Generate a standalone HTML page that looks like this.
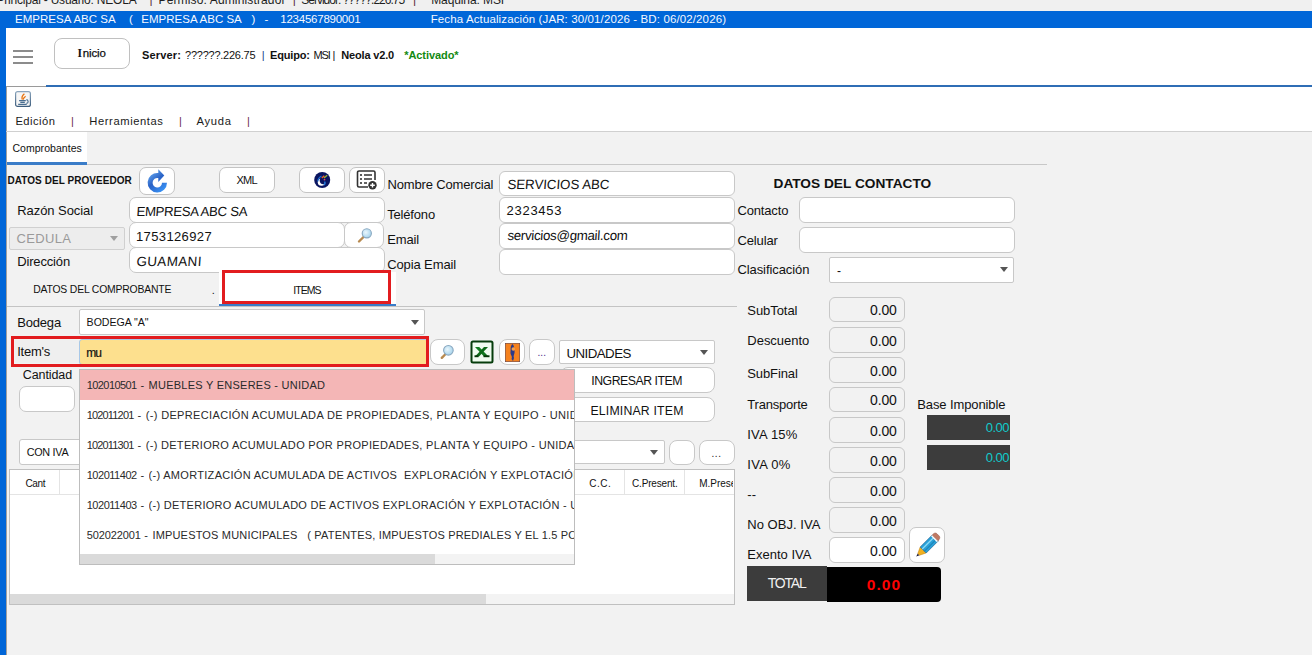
<!DOCTYPE html>
<html><head><meta charset="utf-8"><style>
html,body{margin:0;padding:0;}
body{width:1312px;height:655px;overflow:hidden;position:relative;background:#f2f2f2;font-family:"Liberation Sans", sans-serif;}
.t{position:absolute;white-space:pre;line-height:1;}
</style></head><body>
<div style="position:absolute;left:0px;top:0px;width:1312px;height:11px;background:#f0f0f0"></div>
<div style="position:absolute;left:0px;top:11px;width:1312px;height:17px;background:#0066d8"></div>
<div style="position:absolute;left:0px;top:11px;width:6px;height:644px;background:#0066d8"></div>
<div style="position:absolute;left:6px;top:28px;width:1306px;height:58px;background:#fff"></div>
<div style="position:absolute;left:13px;top:50px;width:20px;height:2px;background:#8c8c8c"></div>
<div style="position:absolute;left:13px;top:56px;width:20px;height:2px;background:#8c8c8c"></div>
<div style="position:absolute;left:13px;top:62px;width:20px;height:2px;background:#8c8c8c"></div>
<div style="position:absolute;left:54px;top:38px;width:76px;height:31px;box-sizing:border-box;border:1px solid #c0c0c0;border-radius:8px;background:#fff"></div>
<div style="position:absolute;left:6px;top:86px;width:1306px;height:1px;background:#9a9a9a"></div>
<div style="position:absolute;left:46px;top:85px;width:1266px;height:1.5px;background:#2f6db5"></div>
<div style="position:absolute;left:6px;top:87px;width:1306px;height:44px;background:#fff"></div>
<div style="position:absolute;left:6px;top:87px;width:1px;height:568px;background:#a0a0a0"></div>
<svg style="position:absolute;left:15px;top:91px" width="16" height="16" viewBox="0 0 16 16">
<defs><linearGradient id="jg" x1="0" y1="0" x2="0" y2="1"><stop offset="0" stop-color="#8aa4bc"/><stop offset="1" stop-color="#3e5e7e"/></linearGradient></defs>
<rect x="0.6" y="0.6" width="14.8" height="14.8" rx="2" fill="#f6f6f6" stroke="url(#jg)" stroke-width="1.2"/>
<path d="M9.4 2.8 C7.4 4.4 6.4 6.2 7.3 8.6" stroke="#e8730f" stroke-width="1.3" fill="none"/>
<path d="M10.6 5.2 C9 6.4 8.1 7.4 8.1 8.8" stroke="#e8730f" stroke-width="1.2" fill="none"/>
<path d="M4.1 9.6 H10.8 M5.3 11.4 H9.8 M3.2 13.4 H11.7" stroke="#4a6e90" stroke-width="1.1"/>
<path d="M11.4 8.6 C13.6 9 13.9 11.8 11.4 12.4" stroke="#4a6e90" stroke-width="1.1" fill="none"/>
</svg>
<div style="position:absolute;left:6px;top:131px;width:1306px;height:1px;background:#d0d0d0"></div>
<div style="position:absolute;left:7px;top:132px;width:80px;height:30px;background:#fff"></div>
<div style="position:absolute;left:7px;top:162px;width:80px;height:3px;background:#3a7cc8"></div>
<div style="position:absolute;left:87px;top:164px;width:960px;height:1px;background:#c8c8c8"></div>
<div style="position:absolute;left:139px;top:167px;width:36px;height:28px;box-sizing:border-box;border:1px solid #c4c4c4;border-radius:7px;background:#fff"></div>
<svg style="position:absolute;left:145px;top:169px" width="26" height="26" viewBox="0 0 26 26">
<defs><linearGradient id="rg" x1="0.2" y1="0" x2="0.9" y2="1"><stop offset="0" stop-color="#6aaef4"/><stop offset="0.45" stop-color="#2a62c6"/><stop offset="1" stop-color="#3c9cff"/></linearGradient></defs>
<path d="M22 13.7 A9.7 9.7 0 1 1 13.3 4.05 L13.3 0.2 L19.3 6.4 L13.3 12.9 L13.3 9.1 A4.7 4.7 0 1 0 17 13.7 Z" fill="url(#rg)"/>
</svg>
<div style="position:absolute;left:219px;top:167px;width:56px;height:26px;box-sizing:border-box;border:1px solid #c4c4c4;border-radius:7px;background:#fff"></div>
<div style="position:absolute;left:299px;top:167px;width:46px;height:26px;box-sizing:border-box;border:1px solid #c4c4c4;border-radius:7px;background:#fff"></div>
<svg style="position:absolute;left:313px;top:171px" width="18" height="18" viewBox="0 0 18 18">
<circle cx="9.2" cy="9" r="8" fill="#0a1560"/>
<circle cx="8.4" cy="11.2" r="3.6" fill="#fff"/><circle cx="10.4" cy="9.5" r="3.7" fill="#0a1560"/>
<path d="M8.5 5 C6 6.5 4.8 8.5 4.8 10.5" stroke="#1a6ad0" stroke-width="1.3" fill="none"/>
<path d="M11.6 10.5 C12.3 11.8 12 13.2 10.8 14" stroke="#2a80e0" stroke-width="1.3" fill="none"/>
<path d="M8.8 7 L11.3 4.8" stroke="#f06030" stroke-width="1.4"/>
<path d="M11 7 L14.2 4.3" stroke="#98b030" stroke-width="1.4"/>
<circle cx="11.5" cy="8.6" r="0.9" fill="#e04868"/>
</svg>
<div style="position:absolute;left:349px;top:167px;width:36px;height:26px;box-sizing:border-box;border:1px solid #c4c4c4;border-radius:7px;background:#fff"></div>
<svg style="position:absolute;left:356px;top:170px" width="22" height="20" viewBox="0 0 22 20">
<path d="M12 17 H3 A1.5 1.5 0 0 1 1.5 15.5 V2.5 A1.5 1.5 0 0 1 3 1 H17.5 A1.5 1.5 0 0 1 19 2.5 V10" stroke="#333" stroke-width="1.6" fill="none"/>
<circle cx="5" cy="5" r="1.1" fill="#333"/><circle cx="5" cy="9" r="1.1" fill="#333"/><circle cx="5" cy="13" r="1.1" fill="#333"/>
<path d="M8 5 H16 M8 9 H16 M8 13 H11" stroke="#333" stroke-width="1.6"/>
<circle cx="16.5" cy="15.3" r="4.2" fill="#333"/>
<path d="M16.5 13 V17.6 M14.2 15.3 H18.8" stroke="#fff" stroke-width="1.4"/>
</svg>
<div style="position:absolute;left:129px;top:197px;width:256px;height:26px;box-sizing:border-box;background:#fff;border:1px solid #c8c8c8;border-radius:7px"></div>
<div style="position:absolute;left:9px;top:227px;width:116px;height:23px;box-sizing:border-box;border:1px solid #d0d0d0;border-radius:2px;background:#ededed"></div>
<div style="position:absolute;left:109.5px;top:235.8px;width:0;height:0;border-left:4.0px solid transparent;border-right:4.0px solid transparent;border-top:5px solid #a0a0a0"></div>
<div style="position:absolute;left:129px;top:222px;width:216px;height:26px;box-sizing:border-box;background:#fff;border:1px solid #c8c8c8;border-radius:7px"></div>
<div style="position:absolute;left:344px;top:222px;width:40px;height:26px;box-sizing:border-box;background:#fff;border:1px solid #c8c8c8;border-radius:7px"></div>
<svg style="position:absolute;left:356px;top:226px" width="18" height="18" viewBox="0 0 18 18">
<defs><radialGradient id="lg" cx="0.4" cy="0.4" r="0.6"><stop offset="0" stop-color="#eaf6fc"/><stop offset="1" stop-color="#a8d4ec"/></radialGradient></defs>
<path d="M3 15.5 L7.5 11" stroke="#b88a50" stroke-width="2.4" stroke-linecap="round"/>
<circle cx="10.8" cy="7.3" r="4.6" fill="url(#lg)" stroke="#8aa8c0" stroke-width="1.1"/>
</svg>
<div style="position:absolute;left:129px;top:247px;width:256px;height:26px;box-sizing:border-box;background:#fff;border:1px solid #c8c8c8;border-radius:7px"></div>
<div style="position:absolute;left:499px;top:171px;width:236px;height:25px;box-sizing:border-box;background:#fff;border:1px solid #c8c8c8;border-radius:6px"></div>
<div style="position:absolute;left:499px;top:197px;width:236px;height:26px;box-sizing:border-box;background:#fff;border:1px solid #c8c8c8;border-radius:6px"></div>
<div style="position:absolute;left:499px;top:223px;width:236px;height:26px;box-sizing:border-box;background:#fff;border:1px solid #c8c8c8;border-radius:6px"></div>
<div style="position:absolute;left:499px;top:249px;width:236px;height:26px;box-sizing:border-box;background:#fff;border:1px solid #c8c8c8;border-radius:6px"></div>
<div style="position:absolute;left:799px;top:197px;width:216px;height:26px;box-sizing:border-box;background:#fff;border:1px solid #c8c8c8;border-radius:6px"></div>
<div style="position:absolute;left:799px;top:227px;width:216px;height:26px;box-sizing:border-box;background:#fff;border:1px solid #c8c8c8;border-radius:6px"></div>
<div style="position:absolute;left:829px;top:257px;width:185px;height:26px;box-sizing:border-box;background:#fff;border:1px solid #c8c8c8;border-radius:2px"></div>
<div style="position:absolute;left:1000.0px;top:267.45px;width:0;height:0;border-left:4.5px solid transparent;border-right:4.5px solid transparent;border-top:5.5px solid #555"></div>
<div style="position:absolute;left:219px;top:272px;width:177px;height:32px;background:#fff"></div>
<div style="position:absolute;left:219px;top:304px;width:177px;height:3px;background:#3a7cc8"></div>
<div style="position:absolute;left:7px;top:306px;width:730px;height:1px;background:#c4c4c4"></div>
<div style="position:absolute;left:221.5px;top:270px;width:169.6px;height:34.3px;box-sizing:border-box;border:3.6px solid #e21c1f"></div>
<div style="position:absolute;left:79px;top:309px;width:346px;height:26px;box-sizing:border-box;background:#fff;border:1px solid #c8c8c8;border-radius:2px"></div>
<div style="position:absolute;left:410.9px;top:319.75px;width:0;height:0;border-left:4.5px solid transparent;border-right:4.5px solid transparent;border-top:5.5px solid #555"></div>
<div style="position:absolute;left:15px;top:340px;width:64px;height:23px;background:#efefef"></div>
<div style="position:absolute;left:79px;top:339px;width:349px;height:26px;box-sizing:border-box;background:#fde08e;border:1px solid #a8c8e8;border-radius:3px"></div>
<div style="position:absolute;left:11px;top:335.8px;width:417.5px;height:31.3px;box-sizing:border-box;border:3.7px solid #e21c1f"></div>
<div style="position:absolute;left:430px;top:339px;width:35px;height:26px;box-sizing:border-box;background:#fff;border:1px solid #c8c8c8;border-radius:8px"></div>
<svg style="position:absolute;left:438px;top:342px" width="18" height="18" viewBox="0 0 18 18">
<path d="M3.8 15.8 L7.6 12" stroke="#b88a50" stroke-width="2.4" stroke-linecap="round"/>
<circle cx="10.4" cy="8.3" r="4.8" fill="url(#lg)" stroke="#8aa8c0" stroke-width="1.1"/>
</svg>
<svg style="position:absolute;left:470px;top:340px" width="24" height="24" viewBox="0 0 24 24">
<rect x="1.5" y="1.5" width="21" height="21" rx="1.5" fill="#f0fcf0" stroke="#063c0c" stroke-width="2"/>
<path d="M5 7 L9.2 7 L18.5 16.5 L14 16.5 Z" fill="#117a20"/>
<path d="M18 7 L14 7 L5 16.5 L9 16.5 Z" fill="#0c6a18"/>
<rect x="13.5" y="15.3" width="6" height="1.9" fill="#053808"/>
<rect x="4.5" y="15.3" width="4" height="1.9" fill="#053808"/>
</svg>
<div style="position:absolute;left:499px;top:339px;width:26px;height:26px;box-sizing:border-box;background:#fff;border:1px solid #c8c8c8;border-radius:8px"></div>
<svg style="position:absolute;left:505px;top:343px" width="15" height="19" viewBox="0 0 15 19">
<rect x="0" y="0" width="15" height="19" fill="#f5821f" stroke="#2a3a7a" stroke-width="0.8"/>
<path d="M7.5 1 C5 3 6 6 5.5 9 C5 12 8 13 6.5 16 L8 18 L9 15 C8 12 10 11 9.5 8 C9 5 9.5 3 7.5 1 Z" fill="#2a3a8a"/>
<circle cx="8.3" cy="6" r="1.8" fill="#f5a050"/>
</svg>
<div style="position:absolute;left:529px;top:339px;width:26px;height:26px;box-sizing:border-box;background:#fff;border:1px solid #c8c8c8;border-radius:8px"></div>
<div style="position:absolute;left:559px;top:340px;width:156px;height:24px;box-sizing:border-box;background:#fff;border:1px solid #c8c8c8;border-radius:2px"></div>
<div style="position:absolute;left:700.0px;top:349.9px;width:0;height:0;border-left:4.5px solid transparent;border-right:4.5px solid transparent;border-top:5px solid #555"></div>
<div style="position:absolute;left:19px;top:386px;width:56px;height:26px;box-sizing:border-box;background:#fff;border:1px solid #c8c8c8;border-radius:7px"></div>
<div style="position:absolute;left:560px;top:367px;width:155px;height:26px;box-sizing:border-box;background:#fff;border:1px solid #c8c8c8;border-radius:8px"></div>
<div style="position:absolute;left:560px;top:397px;width:155px;height:25px;box-sizing:border-box;background:#fff;border:1px solid #c8c8c8;border-radius:8px"></div>
<div style="position:absolute;left:19px;top:439px;width:100px;height:26px;box-sizing:border-box;background:#fff;border:1px solid #c8c8c8;border-radius:3px"></div>
<div style="position:absolute;left:100px;top:440px;width:565px;height:24px;box-sizing:border-box;background:#fff;border:1px solid #c8c8c8;border-radius:2px"></div>
<div style="position:absolute;left:650.0px;top:449.9px;width:0;height:0;border-left:4.5px solid transparent;border-right:4.5px solid transparent;border-top:5px solid #555"></div>
<div style="position:absolute;left:669px;top:440px;width:26px;height:25px;box-sizing:border-box;background:#fff;border:1px solid #c8c8c8;border-radius:8px"></div>
<div style="position:absolute;left:699px;top:440px;width:36px;height:25px;box-sizing:border-box;background:#fff;border:1px solid #c8c8c8;border-radius:8px"></div>
<div style="position:absolute;left:9px;top:469px;width:726px;height:136px;box-sizing:border-box;border:1px solid #c0c0c0;background:#fff"></div>
<div style="position:absolute;left:10px;top:494px;width:724px;height:1px;background:#e4e4e4"></div>
<div style="position:absolute;left:59px;top:470px;width:1px;height:24px;background:#e4e4e4"></div>
<div style="position:absolute;left:624px;top:470px;width:1px;height:24px;background:#e4e4e4"></div>
<div style="position:absolute;left:684px;top:470px;width:1px;height:24px;background:#e4e4e4"></div>
<div style="position:absolute;left:10px;top:594px;width:724px;height:10px;background:#f3f3f3"></div>
<div style="position:absolute;left:10px;top:594px;width:476px;height:10px;background:#dadada"></div>
<div style="position:absolute;left:79px;top:369px;width:496px;height:195.5px;box-sizing:border-box;border:1px solid #bdbdbd;background:#fff"></div>
<div style="position:absolute;left:80px;top:370px;width:494px;height:29.5px;background:#f4b6b6"></div>
<div style="position:absolute;left:80px;top:554px;width:494px;height:9.8px;background:#f3f3f3"></div>
<div style="position:absolute;left:80px;top:554px;width:354.8px;height:9.8px;background:#dadada"></div>
<div style="position:absolute;left:829px;top:297px;width:76px;height:25px;box-sizing:border-box;background:#f2f2f2;border:1px solid #c8c8c8;border-radius:6px"></div>
<div style="position:absolute;left:829px;top:327px;width:76px;height:26px;box-sizing:border-box;background:#f2f2f2;border:1px solid #c8c8c8;border-radius:6px"></div>
<div style="position:absolute;left:829px;top:357px;width:76px;height:26px;box-sizing:border-box;background:#f2f2f2;border:1px solid #c8c8c8;border-radius:6px"></div>
<div style="position:absolute;left:829px;top:387px;width:76px;height:25px;box-sizing:border-box;background:#f2f2f2;border:1px solid #c8c8c8;border-radius:6px"></div>
<div style="position:absolute;left:829px;top:417px;width:76px;height:26px;box-sizing:border-box;background:#f2f2f2;border:1px solid #c8c8c8;border-radius:6px"></div>
<div style="position:absolute;left:829px;top:447px;width:76px;height:26px;box-sizing:border-box;background:#f2f2f2;border:1px solid #c8c8c8;border-radius:6px"></div>
<div style="position:absolute;left:829px;top:477px;width:76px;height:26px;box-sizing:border-box;background:#f2f2f2;border:1px solid #c8c8c8;border-radius:6px"></div>
<div style="position:absolute;left:829px;top:507px;width:76px;height:26px;box-sizing:border-box;background:#f2f2f2;border:1px solid #c8c8c8;border-radius:6px"></div>
<div style="position:absolute;left:829px;top:537px;width:76px;height:26px;box-sizing:border-box;background:#fff;border:1px solid #c8c8c8;border-radius:6px"></div>
<div style="position:absolute;left:909px;top:527px;width:36px;height:36px;box-sizing:border-box;background:#fff;border:1px solid #c8c8c8;border-radius:7px"></div>
<svg style="position:absolute;left:913px;top:532px" width="28" height="28" viewBox="0 0 28 28">
<path d="M3.2 24.6 L4.8 21.6 L6.6 23.2 Z" fill="#1a1a3a"/>
<path d="M4.8 21.6 L7.2 15 L13.2 21 L6.6 23.2 Z" fill="#f0b020" stroke="#c08010" stroke-width="0.5"/>
<path d="M7.2 15 L19 3.2 L25 9.2 L13.2 21 Z" fill="#28a0d8" stroke="#1a5a88" stroke-width="0.6"/>
<path d="M9.2 17 L21 5.2" stroke="#8ad8f4" stroke-width="1.3"/>
<path d="M11.4 19.2 L23.2 7.4" stroke="#1a78a8" stroke-width="1"/>
<path d="M19 3.2 L20.8 1.6 C21.8 0.8 23 0.8 24 1.8 L26.2 4 C27 5 27 6.2 26.2 7.2 L25 9.2 Z" fill="#c07a64" stroke="#905040" stroke-width="0.5"/>
<path d="M18.6 3.8 L24.4 9.6" stroke="#f8f8f8" stroke-width="1.5"/>
</svg>
<div style="position:absolute;left:927px;top:415px;width:83px;height:25px;background:#3c3c3c"></div>
<div style="position:absolute;left:927px;top:445px;width:83px;height:25px;background:#3c3c3c"></div>
<div style="position:absolute;left:747px;top:566px;width:80px;height:35px;background:#3c3c3c"></div>
<div style="position:absolute;left:827px;top:566.5px;width:114px;height:35px;background:#000;border-radius:0 4px 4px 0"></div>
<div class="t" style="left:-3.5px;top:-6.2px;font-size:12px;color:#1e1e1e;letter-spacing:-0.21px;">Principal - Usuario: NEOLA</div>
<div class="t" style="left:149.5px;top:-6.7px;font-size:12px;color:#5a2a3a;">|</div>
<div class="t" style="left:158.5px;top:-6.2px;font-size:12px;color:#1e1e1e;letter-spacing:0.14px;">Permiso: Administrador</div>
<div class="t" style="left:292.8px;top:-6.7px;font-size:12px;color:#5a2a3a;">|</div>
<div class="t" style="left:301.2px;top:-6.2px;font-size:12px;color:#1e1e1e;letter-spacing:-0.99px;">Servidor: ?????.226.75</div>
<div class="t" style="left:412.9px;top:-6.7px;font-size:12px;color:#5a2a3a;">|</div>
<div class="t" style="left:431.2px;top:-6.2px;font-size:12px;color:#1e1e1e;letter-spacing:-0.10px;">Maquina: MSI</div>
<div class="t" style="left:15.0px;top:13.8px;font-size:11.5px;color:#f4f8ff;letter-spacing:0.03px;">EMPRESA ABC SA</div>
<div class="t" style="left:128.9px;top:13.8px;font-size:11.5px;color:#f4f8ff;">(</div>
<div class="t" style="left:141.3px;top:13.8px;font-size:11.5px;color:#f4f8ff;letter-spacing:0.01px;">EMPRESA ABC SA</div>
<div class="t" style="left:251.5px;top:13.8px;font-size:11.5px;color:#f4f8ff;">)</div>
<div class="t" style="left:264.5px;top:13.8px;font-size:11.5px;color:#f4f8ff;">-</div>
<div class="t" style="left:280.3px;top:13.8px;font-size:11.5px;color:#f4f8ff;letter-spacing:-0.24px;">1234567890001</div>
<div class="t" style="left:430.7px;top:13.8px;font-size:11.5px;color:#f4f8ff;letter-spacing:0.12px;">Fecha Actualización (JAR: 30/01/2026 - BD: 06/02/2026)</div>
<div class="t" style="left:77.6px;top:47.5px;font-size:11.5px;color:#111;font-weight:bold;font-family:'Liberation Serif',serif;">I</div>
<div class="t" style="left:82.8px;top:47.5px;font-size:11.5px;color:#111;letter-spacing:-0.16px;-webkit-text-stroke:0.25px #111;">nicio</div>
<div class="t" style="left:141.9px;top:50.2px;font-size:11px;color:#111;font-weight:bold;letter-spacing:0.18px;">Server:</div>
<div class="t" style="left:185.0px;top:50.2px;font-size:11px;color:#111;letter-spacing:-0.24px;">??????.226.75</div>
<div class="t" style="left:261.8px;top:50.2px;font-size:11px;color:#1a3a8a;">|</div>
<div class="t" style="left:270.0px;top:50.2px;font-size:11px;color:#111;font-weight:bold;letter-spacing:-0.16px;">Equipo:</div>
<div class="t" style="left:313.5px;top:50.2px;font-size:11px;color:#111;letter-spacing:-1.13px;">MSI</div>
<div class="t" style="left:332.6px;top:50.2px;font-size:11px;color:#111;">|</div>
<div class="t" style="left:341.2px;top:50.2px;font-size:11px;color:#111;font-weight:bold;letter-spacing:-0.16px;">Neola v2.0</div>
<div class="t" style="left:404.2px;top:50.2px;font-size:11px;color:#128a12;font-weight:bold;letter-spacing:-0.07px;">*Activado*</div>
<div class="t" style="left:15.4px;top:115.6px;font-size:11.2px;color:#1a1a1a;letter-spacing:0.48px;">Edición</div>
<div class="t" style="left:70.9px;top:116.3px;font-size:11px;color:#6a2a4a;">|</div>
<div class="t" style="left:89.3px;top:115.6px;font-size:11.2px;color:#1a1a1a;letter-spacing:0.59px;">Herramientas</div>
<div class="t" style="left:179.1px;top:116.3px;font-size:11px;color:#6a2a4a;">|</div>
<div class="t" style="left:196.6px;top:115.6px;font-size:11.2px;color:#1a1a1a;letter-spacing:0.69px;">Ayuda</div>
<div class="t" style="left:247.0px;top:116.3px;font-size:11px;color:#6a2a4a;">|</div>
<div class="t" style="left:12.4px;top:142.7px;font-size:10.5px;color:#111;letter-spacing:0.05px;">Comprobantes</div>
<div class="t" style="left:7.5px;top:176.1px;font-size:10px;color:#111;font-weight:bold;letter-spacing:0.05px;">DATOS DEL PROVEEDOR</div>
<div class="t" style="left:236.6px;top:174.7px;font-size:11px;color:#111;letter-spacing:-0.81px;">XML</div>
<div class="t" style="left:17.2px;top:203.7px;font-size:13px;color:#111;letter-spacing:-0.06px;">Razón Social</div>
<div class="t" style="left:136.0px;top:204.6px;font-size:13.2px;color:#111;letter-spacing:-0.31px;transform:skewX(-4deg);transform-origin:0 100%;">EMPRESA ABC SA</div>
<div class="t" style="left:16.5px;top:231.6px;font-size:13px;color:#9a9a9a;letter-spacing:0.33px;">CEDULA</div>
<div class="t" style="left:136.0px;top:229.8px;font-size:13px;color:#111;letter-spacing:0.37px;">1753126927</div>
<div class="t" style="left:17.2px;top:255.2px;font-size:13px;color:#111;letter-spacing:-0.15px;">Dirección</div>
<div class="t" style="left:136.0px;top:254.5px;font-size:13.4px;color:#111;letter-spacing:0.42px;transform:skewX(-4deg);transform-origin:0 100%;">GUAMANI</div>
<div class="t" style="left:387.5px;top:178.0px;font-size:13px;color:#111;letter-spacing:-0.16px;">Nombre Comercial</div>
<div class="t" style="left:506.5px;top:177.5px;font-size:13.3px;color:#111;letter-spacing:-0.04px;transform:skewX(-4deg);transform-origin:0 100%;">SERVICIOS ABC</div>
<div class="t" style="left:387.2px;top:207.9px;font-size:13px;color:#111;letter-spacing:-0.17px;">Teléfono</div>
<div class="t" style="left:506.5px;top:203.8px;font-size:13px;color:#111;letter-spacing:0.73px;">2323453</div>
<div class="t" style="left:387.2px;top:232.7px;font-size:13px;color:#111;letter-spacing:-0.13px;">Email</div>
<div class="t" style="left:506.5px;top:229.2px;font-size:13.3px;color:#111;letter-spacing:-0.30px;transform:skewX(-4deg);transform-origin:0 100%;">servicios@gmail.com</div>
<div class="t" style="left:387.2px;top:257.5px;font-size:13px;color:#111;letter-spacing:-0.11px;">Copia Email</div>
<div class="t" style="left:773.5px;top:176.9px;font-size:13.7px;color:#111;font-weight:bold;">DATOS DEL CONTACTO</div>
<div class="t" style="left:737.4px;top:203.9px;font-size:13px;color:#111;letter-spacing:-0.15px;">Contacto</div>
<div class="t" style="left:737.4px;top:234.1px;font-size:13px;color:#111;letter-spacing:-0.11px;">Celular</div>
<div class="t" style="left:737.4px;top:263.0px;font-size:13px;color:#111;letter-spacing:-0.08px;">Clasificación</div>
<div class="t" style="left:837.0px;top:264.8px;font-size:12px;color:#111;">-</div>
<div class="t" style="left:33.2px;top:285.2px;font-size:10.4px;color:#111;letter-spacing:-0.18px;">DATOS DEL COMPROBANTE</div>
<div class="t" style="left:211.8px;top:284.7px;font-size:11px;color:#111;">.</div>
<div class="t" style="left:293.3px;top:285.0px;font-size:10.5px;color:#111;letter-spacing:-0.95px;">ITEMS</div>
<div class="t" style="left:17.2px;top:315.7px;font-size:13px;color:#111;letter-spacing:-0.17px;">Bodega</div>
<div class="t" style="left:86.6px;top:317.0px;font-size:10.6px;color:#111;letter-spacing:-0.03px;">BODEGA &quot;A&quot;</div>
<div class="t" style="left:17.2px;top:344.8px;font-size:13px;color:#111;letter-spacing:-0.25px;">Item&#x27;s</div>
<div class="t" style="left:86.3px;top:347.2px;font-size:12px;color:#111;letter-spacing:-1.07px;-webkit-text-stroke:0.2px #111;">mu</div>
<div class="t" style="left:537.5px;top:348.0px;font-size:10px;color:#4a2a8a;letter-spacing:0.08px;">...</div>
<div class="t" style="left:566.4px;top:346.7px;font-size:13.3px;color:#111;letter-spacing:-0.53px;">UNIDADES</div>
<div class="t" style="left:22.7px;top:369.4px;font-size:12.5px;color:#111;letter-spacing:-0.08px;">Cantidad</div>
<div class="t" style="left:591.2px;top:374.6px;font-size:12.3px;color:#111;letter-spacing:-0.47px;">INGRESAR ITEM</div>
<div class="t" style="left:590.4px;top:404.8px;font-size:12.3px;color:#111;letter-spacing:0.18px;">ELIMINAR ITEM</div>
<div class="t" style="left:26.7px;top:446.8px;font-size:10.8px;color:#111;letter-spacing:-0.27px;">CON IVA</div>
<div class="t" style="left:711.5px;top:448.5px;font-size:10px;color:#222;letter-spacing:0.58px;">...</div>
<div class="t" style="left:25.5px;top:479.0px;font-size:10px;color:#111;letter-spacing:-0.38px;">Cant</div>
<div class="t" style="left:589.3px;top:479.3px;font-size:10px;color:#111;letter-spacing:0.50px;">C.C.</div>
<div class="t" style="left:632.0px;top:479.3px;font-size:10px;color:#111;letter-spacing:-0.17px;">C.Present.</div>
<div class="t" style="left:699.2px;top:479.3px;font-size:10px;color:#111;width:34px;overflow:hidden;">M.Prese</div>
<div class="t" style="left:86.7px;top:379.7px;font-size:11px;color:#2a2a2a;letter-spacing:-0.57px;">102010501</div>
<div class="t" style="left:140.4px;top:379.7px;font-size:11px;color:#2a2a2a;">-</div>
<div class="t" style="left:148.6px;top:379.7px;font-size:11px;color:#2a2a2a;letter-spacing:0.25px;">MUEBLES Y ENSERES - UNIDAD</div>
<div class="t" style="left:86.7px;top:409.7px;font-size:11px;color:#2a2a2a;letter-spacing:-0.83px;">102011201</div>
<div class="t" style="left:137.5px;top:409.7px;font-size:11px;color:#2a2a2a;">-</div>
<div class="t" style="left:145.7px;top:409.7px;font-size:11px;color:#2a2a2a;letter-spacing:0.35px;width:428.3px;overflow:hidden;padding:4px 0 3px 0;margin-top:-4px;">(-) DEPRECIACIÓN ACUMULADA DE PROPIEDADES, PLANTA Y EQUIPO - UNIDAD</div>
<div class="t" style="left:86.7px;top:439.7px;font-size:11px;color:#2a2a2a;letter-spacing:-0.83px;">102011301</div>
<div class="t" style="left:137.5px;top:439.7px;font-size:11px;color:#2a2a2a;">-</div>
<div class="t" style="left:145.7px;top:439.7px;font-size:11px;color:#2a2a2a;letter-spacing:0.31px;width:428.3px;overflow:hidden;padding:4px 0 3px 0;margin-top:-4px;">(-) DETERIORO ACUMULADO POR PROPIEDADES, PLANTA Y EQUIPO - UNIDAD</div>
<div class="t" style="left:86.7px;top:469.7px;font-size:11px;color:#2a2a2a;letter-spacing:-0.47px;">102011402</div>
<div class="t" style="left:140.4px;top:469.7px;font-size:11px;color:#2a2a2a;">-</div>
<div class="t" style="left:148.6px;top:469.7px;font-size:11px;color:#2a2a2a;letter-spacing:0.30px;width:425.4px;overflow:hidden;padding:4px 0 3px 0;margin-top:-4px;">(-) AMORTIZACIÓN ACUMULADA DE ACTIVOS  EXPLORACIÓN Y EXPLOTACIÓN - UNIDAD</div>
<div class="t" style="left:86.7px;top:499.7px;font-size:11px;color:#2a2a2a;letter-spacing:-0.47px;">102011403</div>
<div class="t" style="left:140.4px;top:499.7px;font-size:11px;color:#2a2a2a;">-</div>
<div class="t" style="left:148.6px;top:499.7px;font-size:11px;color:#2a2a2a;letter-spacing:0.28px;width:425.4px;overflow:hidden;padding:4px 0 3px 0;margin-top:-4px;">(-) DETERIORO ACUMULADO DE ACTIVOS EXPLORACIÓN Y EXPLOTACIÓN - UNIDAD</div>
<div class="t" style="left:86.7px;top:529.7px;font-size:11px;color:#2a2a2a;letter-spacing:-0.10px;">502022001</div>
<div class="t" style="left:144.2px;top:529.7px;font-size:11px;color:#2a2a2a;">-</div>
<div class="t" style="left:152.4px;top:529.7px;font-size:11px;color:#2a2a2a;letter-spacing:0.18px;width:421.6px;overflow:hidden;padding:4px 0 3px 0;margin-top:-4px;">IMPUESTOS MUNICIPALES   ( PATENTES, IMPUESTOS PREDIALES Y EL 1.5 POR MIL )</div>
<div class="t" style="left:747.3px;top:303.8px;font-size:13px;color:#111;letter-spacing:-0.06px;">SubTotal</div>
<div class="t" style="left:747.3px;top:333.6px;font-size:13px;color:#111;letter-spacing:-0.02px;">Descuento</div>
<div class="t" style="left:747.3px;top:367.3px;font-size:13px;color:#111;letter-spacing:-0.12px;">SubFinal</div>
<div class="t" style="left:747.3px;top:397.7px;font-size:13px;color:#111;letter-spacing:-0.21px;">Transporte</div>
<div class="t" style="left:747.3px;top:427.8px;font-size:13px;color:#111;letter-spacing:0.18px;">IVA 15%</div>
<div class="t" style="left:747.3px;top:457.9px;font-size:13px;color:#111;letter-spacing:0.26px;">IVA 0%</div>
<div class="t" style="left:747.3px;top:487.5px;font-size:13px;color:#111;">--</div>
<div class="t" style="left:747.3px;top:517.7px;font-size:13px;color:#111;letter-spacing:0.03px;">No OBJ. IVA</div>
<div class="t" style="left:747.3px;top:547.5px;font-size:13px;color:#111;">Exento IVA</div>
<div class="t" style="left:870.0px;top:303.2px;font-size:14px;color:#111;letter-spacing:-0.12px;">0.00</div>
<div class="t" style="left:870.0px;top:333.7px;font-size:14px;color:#111;letter-spacing:-0.12px;">0.00</div>
<div class="t" style="left:870.0px;top:363.7px;font-size:14px;color:#111;letter-spacing:-0.12px;">0.00</div>
<div class="t" style="left:870.0px;top:393.2px;font-size:14px;color:#111;letter-spacing:-0.12px;">0.00</div>
<div class="t" style="left:870.0px;top:423.7px;font-size:14px;color:#111;letter-spacing:-0.12px;">0.00</div>
<div class="t" style="left:870.0px;top:453.7px;font-size:14px;color:#111;letter-spacing:-0.12px;">0.00</div>
<div class="t" style="left:870.0px;top:483.7px;font-size:14px;color:#111;letter-spacing:-0.12px;">0.00</div>
<div class="t" style="left:870.0px;top:513.7px;font-size:14px;color:#111;letter-spacing:-0.12px;">0.00</div>
<div class="t" style="left:870.0px;top:543.7px;font-size:14px;color:#111;letter-spacing:-0.12px;">0.00</div>
<div class="t" style="left:917.2px;top:397.6px;font-size:13px;color:#111;letter-spacing:-0.10px;">Base Imponible</div>
<div class="t" style="left:985.7px;top:421.0px;font-size:13px;color:#10cccc;letter-spacing:-0.50px;">0.00</div>
<div class="t" style="left:985.7px;top:451.2px;font-size:13px;color:#10cccc;letter-spacing:-0.50px;">0.00</div>
<div class="t" style="left:767.7px;top:576.0px;font-size:14px;color:#f0f0f0;letter-spacing:-1.21px;">TOTAL</div>
<div class="t" style="left:866.7px;top:576.9px;font-size:15.5px;color:#ff0000;font-weight:bold;letter-spacing:1.08px;">0.00</div>
</body></html>
